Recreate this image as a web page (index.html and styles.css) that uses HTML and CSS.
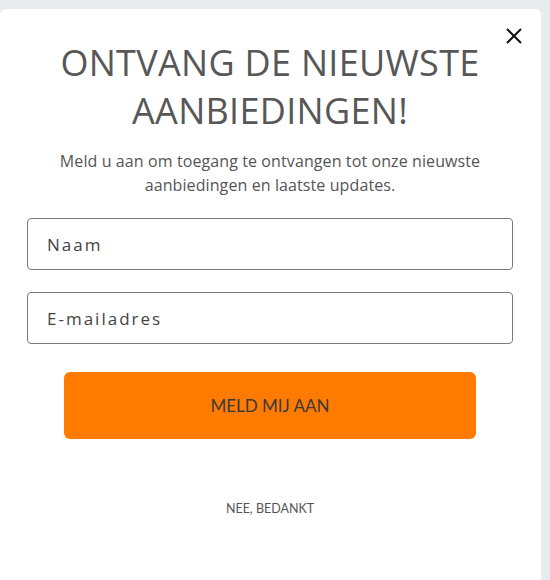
FILE: index.html
```html
<!DOCTYPE html>
<html lang="nl">
<head>
<meta charset="utf-8">
<link rel="stylesheet" href="styles.css">
</head>
<body>
<div class="card">
  <button class="close" aria-label="Sluiten">
    <svg width="16" height="16" viewBox="0 0 16 16"><path d="M1 1 L15 15 M15 1 L1 15" stroke="#111" stroke-width="2" fill="none"/></svg>
  </button>
  <h1 class="title">ONTVANG DE NIEUWSTE<br>AANBIEDINGEN!</h1>
  <p class="sub">Meld u aan om toegang te ontvangen tot onze nieuwste<br>aanbiedingen en laatste updates.</p>
  <div class="field first"><input class="input" type="text" placeholder="Naam"></div>
  <div class="field"><input class="input" type="email" placeholder="E-mailadres"></div>
  <button class="submit">MELD MIJ AAN</button>
  <a class="decline" href="#">NEE, BEDANKT</a>
</div>
</body>
</html>
```
FILE: styles.css
```css
html, body { margin: 0; padding: 0; }
body {
  background: #e9ecef;
  font-family: "Open Sans", "DejaVu Sans", sans-serif;
  height: 580px;
  overflow: hidden;
}
.card {
  position: relative;
  width: 541px;
  margin-top: 9px;
  height: 600px;
  background: #fff;
  border-radius: 6px;
  display: flex;
  flex-direction: column;
  align-items: center;
  box-sizing: border-box;
  padding: 30px 1px 0 0;
}
.close {
  position: absolute;
  top: 19px;
  left: 506px;
  width: 16px;
  height: 16px;
  padding: 0;
  border: 0;
  background: none;
  display: flex;
}
.title {
  margin: 0;
  font-weight: 400;
  font-size: 36px;
  line-height: 48px;
  color: #575757;
  text-align: center;
  letter-spacing: 0.3px;
}
.sub {
  margin: 14px 0 0;
  font-size: 16px;
  line-height: 24px;
  letter-spacing: 0.1px;
  color: #555;
  text-align: center;
}
.field {
  width: 486px;
  margin-top: 22px;
}
.field.first { margin-top: 21px; }
.input {
  width: 100%;
  height: 52px;
  box-sizing: border-box;
  border: 1px solid #7a7a7a;
  border-radius: 4px;
  padding: 0 19px;
  font-family: inherit;
  font-size: 17px;
  letter-spacing: 2px;
  color: #444;
  outline: none;
}
.input::placeholder { color: #444; }
.submit {
  margin-top: 28px;
  width: 412px;
  height: 67px;
  border: 0;
  border-radius: 6px;
  background: #ff7b00;
  color: #3a3a3a;
  font-family: "Lato", sans-serif;
  font-size: 17px;
  cursor: pointer;
}
.decline {
  margin-top: 62px;
  font-size: 12.5px;
  color: #555;
  text-decoration: none;
  font-family: "Lato", sans-serif;
}
```
